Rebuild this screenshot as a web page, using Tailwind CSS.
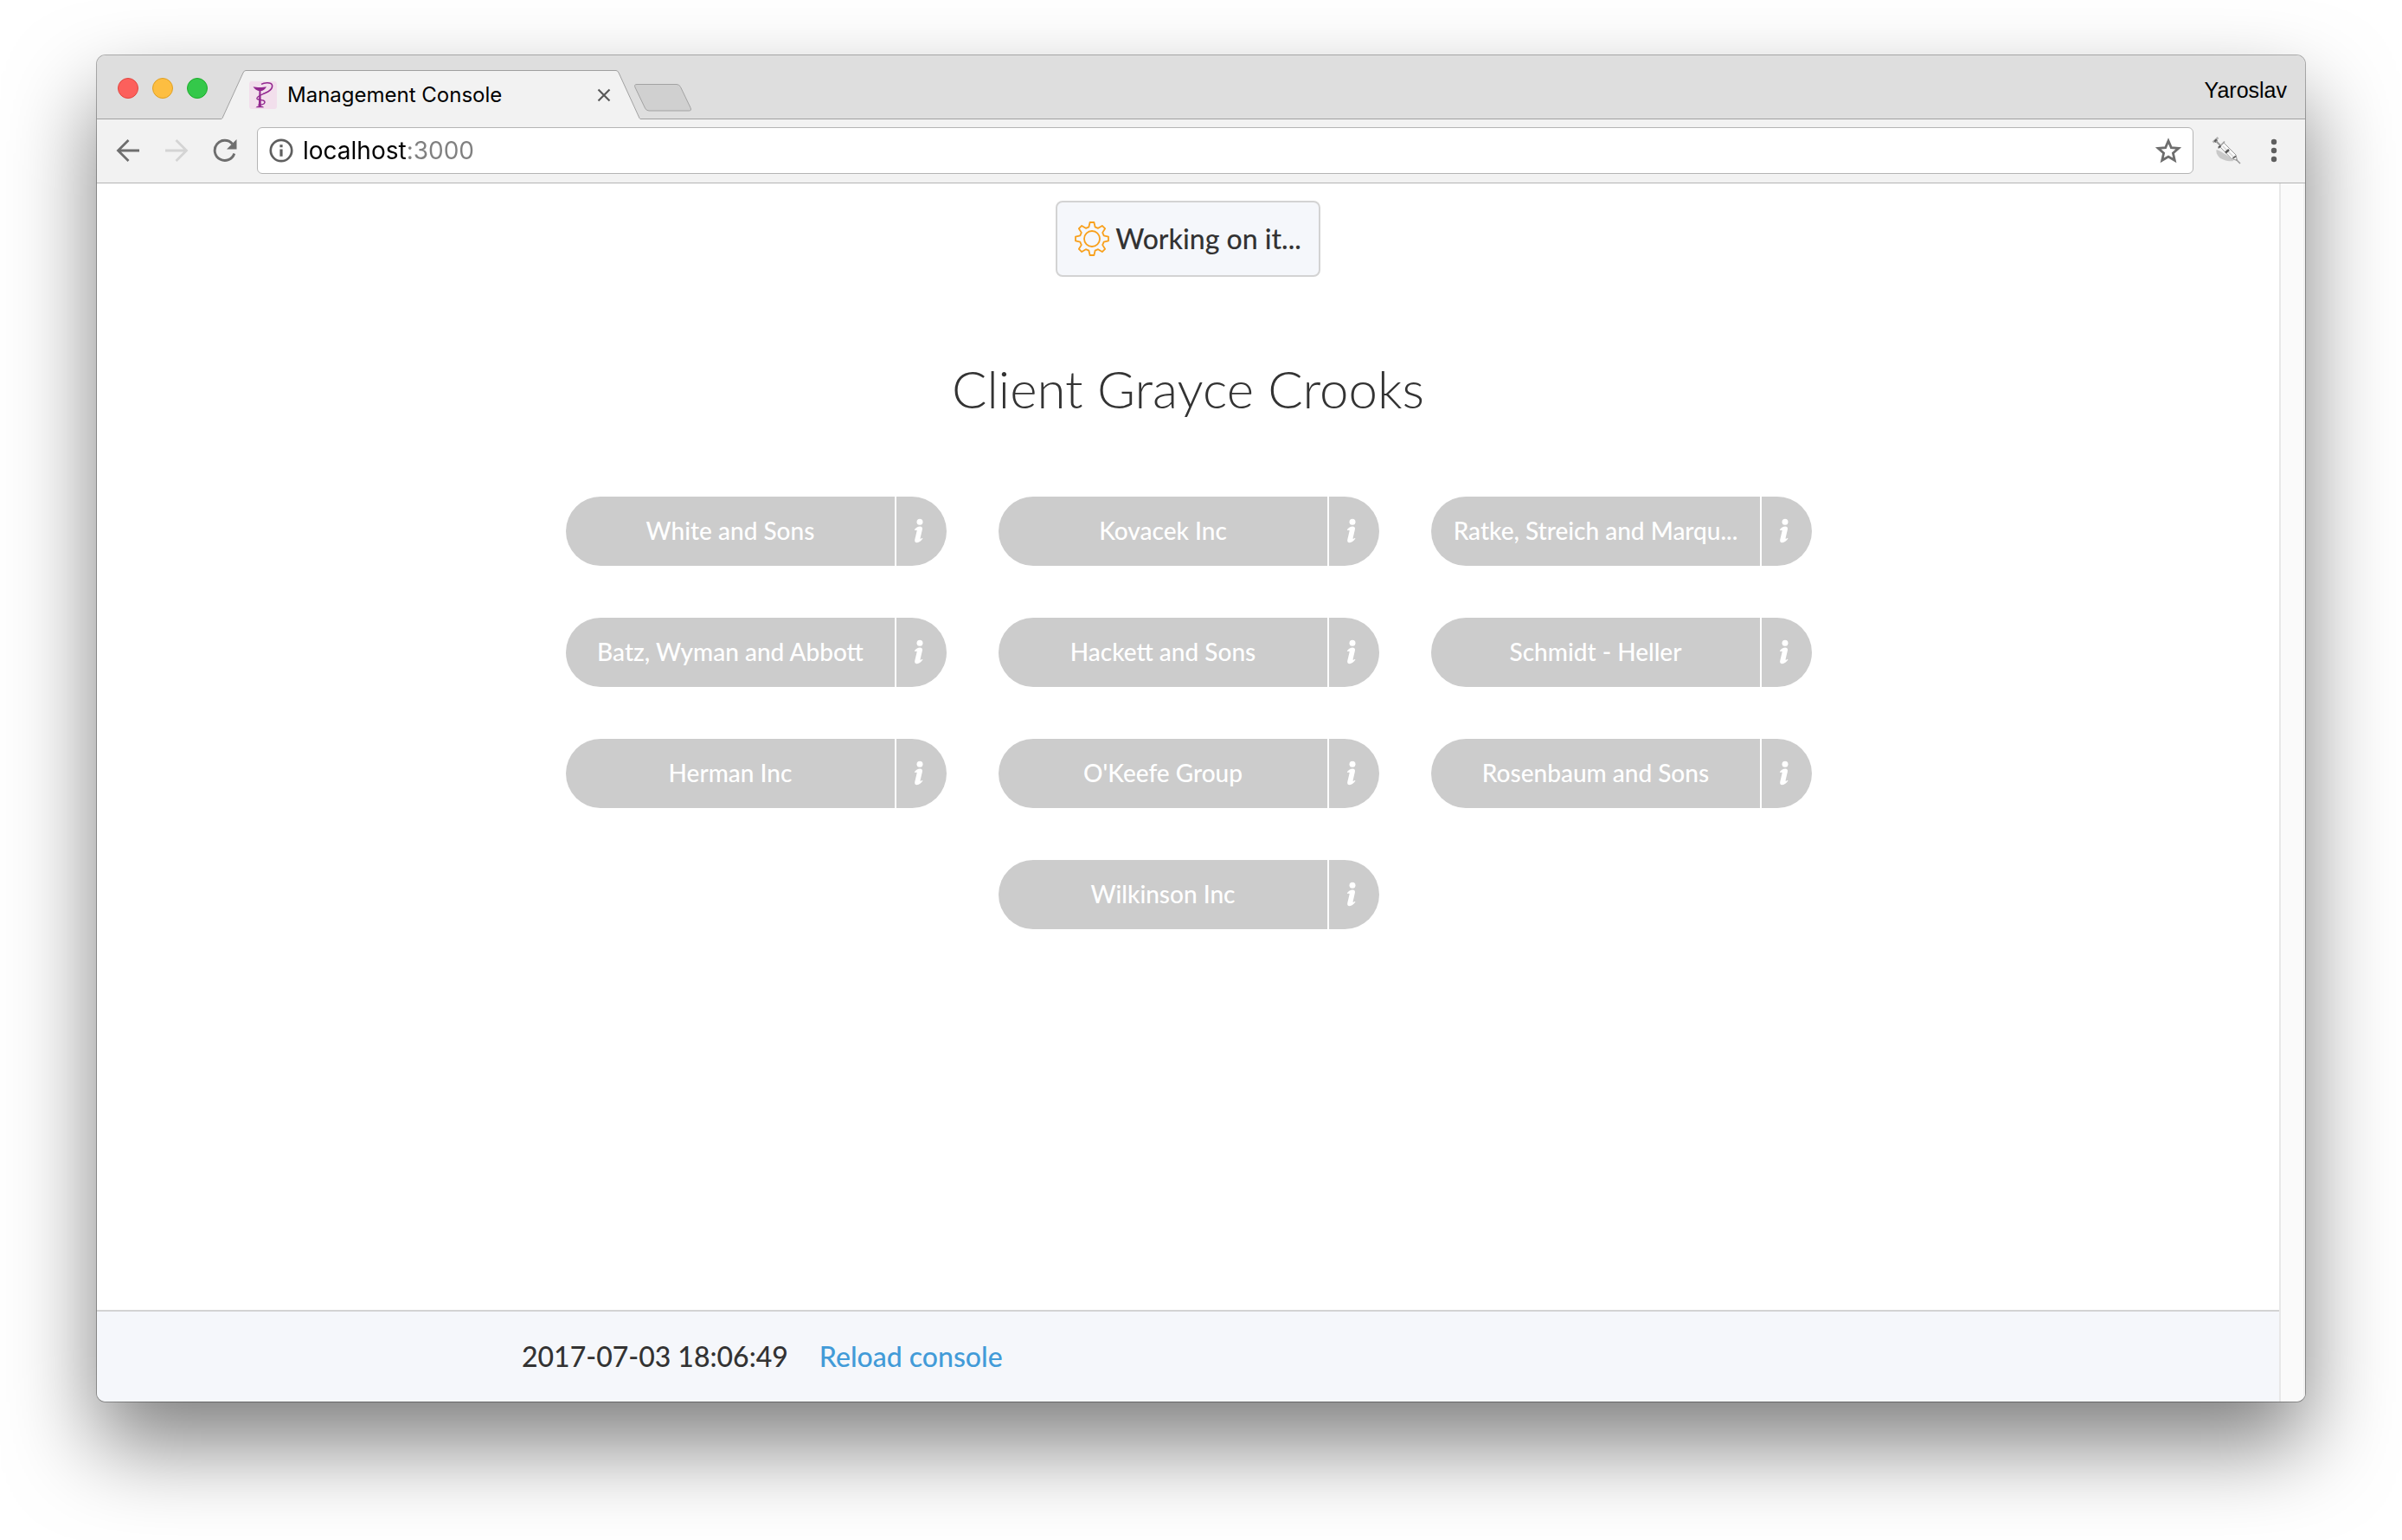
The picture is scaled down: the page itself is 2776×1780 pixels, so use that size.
<!DOCTYPE html>
<html lang="en">
<head>
<meta charset="utf-8">
<meta name="viewport" content="width=device-width, initial-scale=1">
<title>Management Console</title>
<script src="https://cdn.jsdelivr.net/npm/@tailwindcss/browser@4"></script>
</head>
<body class="flex min-h-screen flex-col bg-white px-28 pt-16 pb-40 font-[Lato,sans-serif] font-medium text-[#333]">

<svg class="hidden" aria-hidden="true">
  <symbol id="info" viewBox="0 0 12 30">
    <circle cx="7" cy="4.200" r="3.500"/>
    <path d="M.8 13.200C2.400 10.900 5 9.500 7.200 9.500c2.300 0 3.200 1.300 2.700 3.600L7.700 22.600c-.3 1.200 0 1.500.7 1.100l1.500-.9.5.8c-1.500 2.500-4.300 4.600-6.700 4.600-2.200 0-2.900-1.600-2.400-3.800l2.300-9.600c.2-1-.2-1.300-.9-1L1.400 14z"/>
  </symbol>
</svg>

<div class="flex grow flex-col overflow-hidden rounded-[10px] bg-white shadow-[0_0_0_1px_rgba(0,0,0,0.3),0_50px_100px_rgba(0,0,0,0.5)]">

  <!-- Tab strip -->
  <div class="flex h-[74px] items-end bg-[#dedede] font-normal shadow-[inset_0_-1px_0_#a0a0a0]">
    <div class="flex gap-4 self-center pt-0.5 pl-6">
      <button aria-label="Close window" class="size-6 rounded-full border border-[#e2463f] bg-[#fc605c]"></button>
      <button aria-label="Minimize window" class="size-6 rounded-full border border-[#dfa023] bg-[#fdbe41]"></button>
      <button aria-label="Zoom window" class="size-6 rounded-full border border-[#1dad2b] bg-[#34c84a]"></button>
    </div>

    <div class="ml-4 flex h-[57px] items-stretch">
      <svg class="h-[57px] w-7 shrink-0" viewBox="0 0 28 57" fill="none"><path d="M0 57l25-54Q26.200.5 28 .5V57z" fill="#f2f2f2"/><path d="M0 56.500l1-1L25 3Q26.200.5 28 .5" stroke="#a0a0a0"/></svg>
      <div class="flex w-[428px] items-center border-t border-[#a0a0a0] bg-[#f2f2f2] pr-1 pl-1">
        <svg class="size-8 shrink-0" viewBox="0 0 32 32" fill="none">
          <rect width="32" height="32" rx="3" fill="#f2dfec"/>
          <path d="M4.500 6.300c4 1 11.500 1 15.500 0-1.600 3-4 4.600-6.600 4.900l.4 17.300c1.300.3 2.500.8 3.300 1.700H7.500c.8-.9 2-1.400 3.300-1.700l.7-17.300c-2.900-.4-5.400-2.200-7-4.900z" fill="#92278f"/>
          <path d="M14 3.300c3.500-2.200 11.500-2.400 12.500.9 1.200 5-4 7.600-9 9.800-4.500 2-9.300 3.600-8.500 6 .9 2.200 9.600.8 9 4.300-.4 2.200-4.200 3-7.500 2.600" stroke="#92278f" stroke-width="1.500"/>
        </svg>
        <span class="ml-3 grow font-[Inter,sans-serif] text-2xl text-black">Management Console</span>
        <button aria-label="Close tab" class="mr-0.5"><svg class="size-4" viewBox="0 0 16 16" stroke="#5a5a5a" stroke-width="2.200"><path d="M1.500 1.500l13 13M14.500 1.500l-13 13"/></svg></button>
      </div>
      <svg class="h-[57px] w-7 shrink-0" viewBox="0 0 28 57" fill="none"><path d="M28 57L3 3Q1.800.5 0 .5V57z" fill="#f2f2f2"/><path d="M28 56.500l-1-1L3 3Q1.800.5 0 .5" stroke="#a0a0a0"/></svg>
    </div>

    <button aria-label="New tab" class="-ml-[7px] mb-[9px]"><svg class="h-8 w-[66px]" viewBox="0 0 66 32"><path d="M3 .5h46q3 0 4.500 3L65 27.500q1.500 3.500-1.500 3.500H17q-3 0-4.500-3L1 4Q-.5.5 3 .5z" fill="#d0d0d0" stroke="#a2a2a2"/></svg></button>
    <button class="mr-[21px] mb-5 ml-auto font-['Liberation_Sans',sans-serif] text-[25px] leading-7 text-black">Yaroslav</button>
  </div>

  <!-- Toolbar -->
  <div class="flex h-[74px] items-center border-b border-[#b4b4b4] bg-[#f2f2f2] pr-6 pb-px pl-[22px] font-normal">
    <button aria-label="Back"><svg class="size-7" viewBox="0 0 28 28" fill="none" stroke="#6e6e6e" stroke-width="2.800"><path d="M27 14H3M14.500 2L2.500 14l12 12"/></svg></button>
    <button aria-label="Forward" class="ml-7" disabled><svg class="size-7" viewBox="0 0 28 28" fill="none" stroke="#d4d4d4" stroke-width="2.800"><path d="M1 14h24M13.500 2l12 12-12 12"/></svg></button>
    <button aria-label="Reload" class="ml-7"><svg class="size-7" viewBox="0 0 28 28" fill="none"><path d="M22.500 6.200A11.600 11.600 0 1 0 24.800 17.500" stroke="#6e6e6e" stroke-width="2.900"/><path d="M27.500 1v11.500H16z" fill="#6e6e6e"/></svg></button>
    <div class="ml-[23px] flex h-[54px] grow items-center rounded-md border border-[#b4b4b4] bg-white pr-3 pl-[13px]">
      <svg class="size-7 shrink-0" viewBox="0 0 28 28" fill="none"><circle cx="14" cy="14" r="12.200" stroke="#5f5f5f" stroke-width="2.700"/><path d="M14 7.300v3M14 12.600v8.200" stroke="#5f5f5f" stroke-width="3.200"/></svg>
      <input aria-label="Address" value="localhost:3000" class="ml-[11px] min-w-0 grow bg-[linear-gradient(to_right,#000_119px,#808080_119px)] bg-clip-text font-[Inter,sans-serif] text-[28px] leading-9 text-transparent outline-none">
      <button aria-label="Bookmark this page"><svg class="size-8" viewBox="0 0 32 32" fill="none" stroke="#6e6e6e" stroke-width="2.800"><path d="M16 4.800l3.300 7.800 8.500.8-6.400 5.600 1.900 8.300-7.300-4.300-7.300 4.300 1.900-8.300-6.400-5.600 8.500-.8z"/></svg></button>
    </div>
    <button aria-label="Syringe extension" class="ml-5"><svg class="size-9" viewBox="0 0 36 36" fill="none">
      <path d="M6.500 17c4 1 14 7 20 13-6 1-14-1-17.500-5-2-2.500-3-5-2.500-8z" fill="#c9c9c9"/>
      <path d="M2.500 8.500L8.500 3" stroke="#b4b4b4" stroke-width="2.500"/><path d="M4.500 8l2.500-2.500" stroke="#555" stroke-width="2.500"/>
      <path d="M6 7l6 6" stroke="#9a9a9a" stroke-width="2"/>
      <path d="M10.500 13.500l4.500-4.500L29 23l1.500 6.500L24 27.500z" fill="#fafafa" stroke="#9a9a9a"/>
      <path d="M8.500 15.500l7.500-8" stroke="#a5a5a5" stroke-width="1.800"/><path d="M9 14.500l2.500-2" stroke="#555" stroke-width="2"/>
      <path d="M14 13l12 12" stroke="#d8d8d8" stroke-width="1.500"/><path d="M17 20.500l4-3.500" stroke="#555" stroke-width="2.500"/><path d="M25.500 27l3.500-2.500" stroke="#666" stroke-width="2"/>
      <path d="M29 28l5 5" stroke="#999" stroke-width="1.500"/>
    </svg></button>
    <button aria-label="Menu" class="ml-[25px]"><svg class="h-7 w-6" viewBox="0 0 24 28" fill="#5f5f5f"><circle cx="12" cy="4" r="3.200"/><circle cx="12" cy="14" r="3.200"/><circle cx="12" cy="24" r="3.200"/></svg></button>
  </div>

  <!-- Page -->
  <div class="flex grow">
    <div class="flex grow flex-col">
      <main class="flex grow flex-col items-center pt-5">
        <div role="status" class="flex h-[88px] items-center rounded-lg border-2 border-[#d3d3d3] bg-[#f5f7fb] px-5">
          <svg class="size-10" viewBox="0 0 40 40" fill="none" stroke="#f8a01c" stroke-width="1.800" stroke-linejoin="round">
            <circle cx="20" cy="20" r="9"/>
            <path d="M17.600 1h4.800l1.200 5.300 3.500 1.500 4.700-2.900 3.300 3.300-2.900 4.700 1.500 3.500 5.300 1.200v4.800l-5.300 1.200-1.500 3.500 2.900 4.700-3.300 3.300-4.700-2.900-3.500 1.500-1.200 5.300h-4.800l-1.200-5.300-3.500-1.500-4.700 2.900-3.300-3.300 2.900-4.700-1.500-3.500L1 22.400v-4.800l5.300-1.200 1.500-3.500-2.900-4.700 3.300-3.300 4.700 2.900 3.500-1.500z"/>
          </svg>
          <span class="ml-[7px] text-[32px] leading-[38px]">Working on it...</span>
        </div>

        <h1 class="mt-[93px] text-6xl leading-[72px] font-light">Client Grayce Crooks</h1>

        <ul id="companies" class="mt-[89px] flex max-w-[1442px] flex-wrap justify-center gap-[60px] pb-16 pl-0.5"></ul>
      </main>

      <footer class="border-t-2 border-[#d3d3d3] bg-[#f5f7fb] py-[33px]">
        <div class="mx-auto flex w-full max-w-[1540px] gap-9 text-[32px] leading-[38px]">
          <time datetime="2017-07-03T18:06:49">2017-07-03 18:06:49</time>
          <a href="#" class="text-[#429bd8]">Reload console</a>
        </div>
      </footer>
    </div>
    <div class="w-[30px] border-r-2 border-l-2 border-r-[#f1f1f1] border-l-[#e8e8e8] bg-[#fafafa]"></div>
  </div>
</div>

<template id="company">
  <li class="flex h-20 w-[440px] gap-0.5 text-[28px] leading-[34px] text-white">
    <button class="w-[380px] truncate rounded-l-full bg-[#ccc] px-6 pb-0.5"></button>
    <button class="flex grow items-center rounded-r-full bg-[#ccc] pl-5"><svg class="h-[30px] w-3 fill-white"><use href="#info"/></svg></button>
  </li>
</template>
<script>
  const names = ["White and Sons", "Kovacek Inc", "Ratke, Streich and Marqu...", "Batz, Wyman and Abbott", "Hackett and Sons", "Schmidt - Heller", "Herman Inc", "O'Keefe Group", "Rosenbaum and Sons", "Wilkinson Inc"];
  const list = document.getElementById("companies");
  const row = document.getElementById("company");
  for (const name of names) {
    const item = row.content.cloneNode(true);
    const [label, info] = item.querySelectorAll("button");
    label.textContent = name;
    info.setAttribute("aria-label", "About " + name);
    list.append(item);
  }
</script>
</body>
</html>
